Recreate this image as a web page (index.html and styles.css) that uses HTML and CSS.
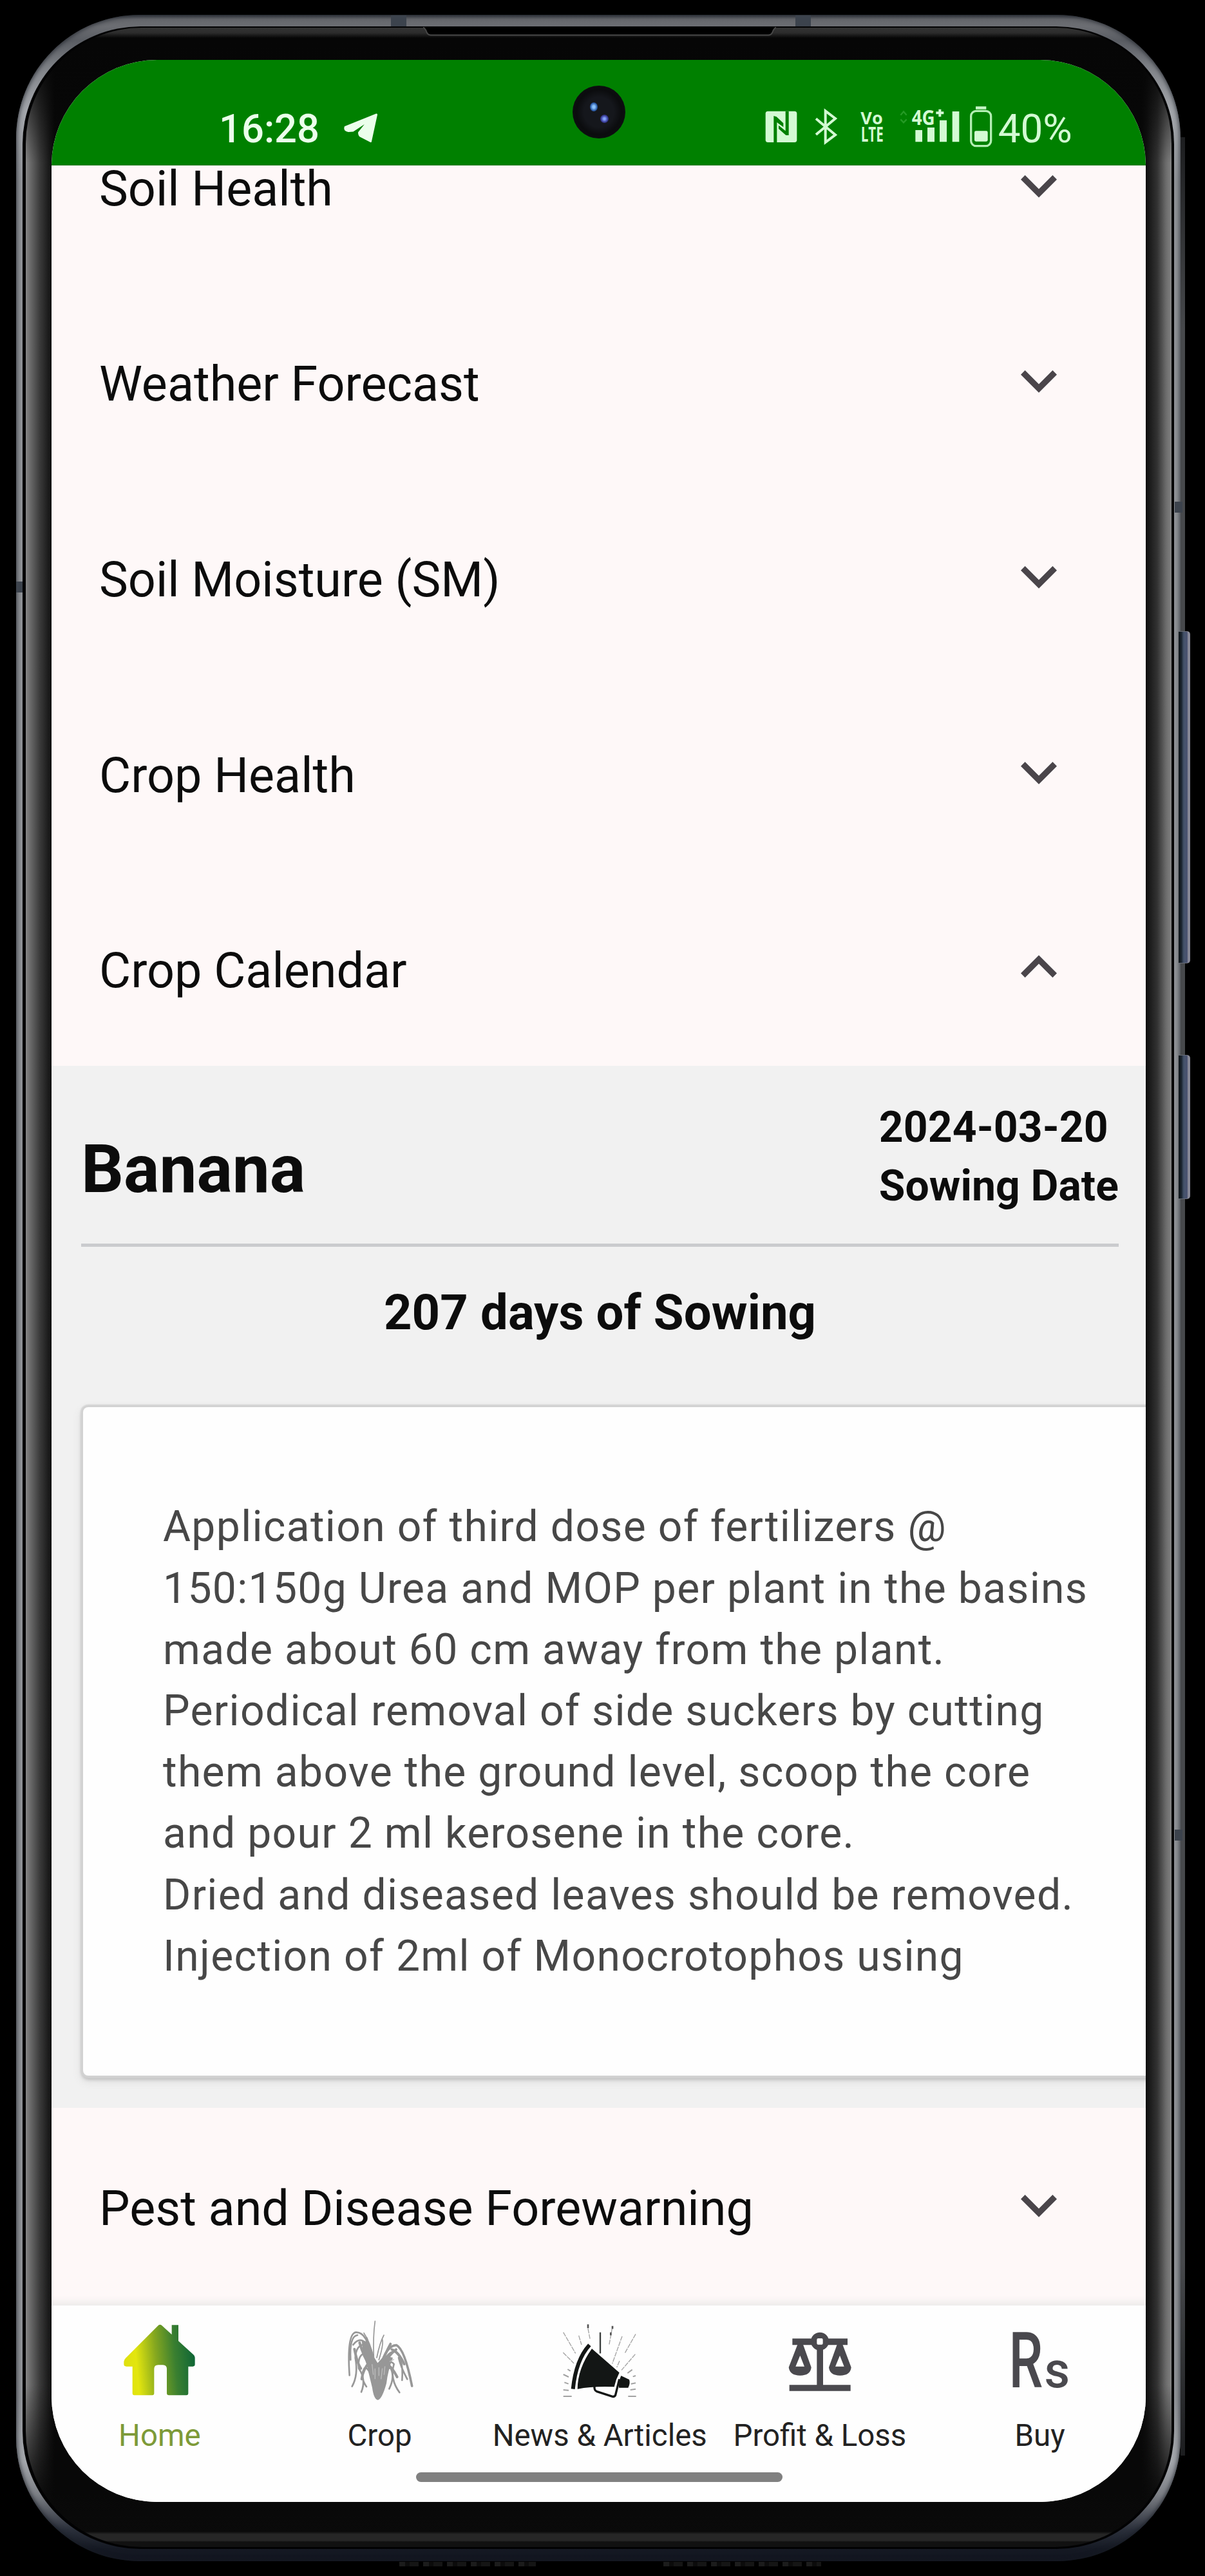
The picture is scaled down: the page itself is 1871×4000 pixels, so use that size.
FILE: index.html
```html
<!DOCTYPE html>
<html lang="en">
<head>
<meta charset="utf-8">
<title>Crop Advisory</title>
<link rel="stylesheet" href="styles.css">
</head>
<body>
<svg class="defs" width="0" height="0" aria-hidden="true">
  <symbol id="chevron" viewBox="0 0 24 24"><path d="M16.59 8.59 12 13.17 7.41 8.59 6 10l6 6 6-6z"/></symbol>
</svg>
<div class="device">
  <i class="edge edge-right"></i>
  <i class="key key-volume"></i>
  <i class="key key-power"></i>
  <i class="band band-top-left"></i>
  <i class="band band-top-right"></i>
  <i class="band band-left"></i>
  <i class="band band-right"></i>
  <i class="band band-right-low"></i>
  <i class="port port-left"></i>
  <i class="port port-right"></i>
  <div class="seam">
    <div class="glass">
      <svg class="speaker" viewBox="0 0 548 14"><path d="M0 0Q4 3 6 9Q8 12.500 12 12.500H536Q540 12.500 542 9Q544 3 548 0Z" fill="#000"/><path d="M0 0Q4 3 6 9Q8 12.500 12 12.500H536Q540 12.500 542 9Q544 3 548 0" fill="none" stroke="#484848" stroke-width="2"/></svg>
      <main class="screen">
        <header class="status">
          <span class="clock">16:28</span>
          <svg class="plane" viewBox="530 160 60 70"><path d="M584.500 178 536 197.500Q534.500 202.500 541 203.500L548 203 573 186.500 557.500 206Q557.500 210 560 211.500L575.500 219.500Z" fill="#ebffeb" stroke="#ebffeb" stroke-width="3" stroke-linejoin="round"/></svg>
          <div class="camera"><i></i><b></b></div>
          <div class="indicators">
            <svg width="63.330" height="70" viewBox="50 120 190 210"><rect x="55" y="158" width="146" height="145" rx="11" fill="#d3fad3"/><path d="M93 303V180L106 184 138 214V232L108 210V303ZM163 158V270L150 270 116 240V224L148 250V158Z" fill="#008000"/></svg>
            <svg width="70" height="70" viewBox="240 120 210 210"><path d="M291 193 381 268 335 303V157L381 192 291 267" fill="none" stroke="#d3fad3" stroke-width="12"/></svg>
            <svg class="tiny" width="70" height="70" viewBox="450 120 210 210"><text x="499" y="220" font-size="82" textLength="103" lengthAdjust="spacingAndGlyphs">Vo</text><text x="500" y="301" font-size="94" textLength="105" lengthAdjust="spacingAndGlyphs">LTE</text></svg>
            <svg class="tiny" width="110" height="70" viewBox="660 120 330 210"><path d="M685 176 699 160 713 176M685 196 699 211 713 196" fill="none" stroke="#259a25" stroke-width="7"/><text x="737" y="222" font-size="96" textLength="108" lengthAdjust="spacingAndGlyphs">4G</text><path d="M754 246H786V301H754ZM810 234H843V301H810ZM867 200H900V301H867ZM926 159H958V301H926ZM850 160H862V149H874V160H886V172H874V184H862V172H850Z" fill="#d3fad3"/></svg>
            <svg width="46.670" height="70" viewBox="990 120 140 210"><path d="M1035 136H1084V149H1035Z" fill="#c6f6c6"/><rect x="1013" y="157" width="93" height="163" rx="24" fill="none" stroke="#b4efb4" stroke-width="10"/><rect x="1029" y="250" width="62" height="49" rx="7" fill="#d3fad3"/></svg>
            <span class="percent">40%</span>
          </div>
        </header>

        <div class="scroll">
          <div class="list">
            <section class="row"><h2>Soil Health</h2><svg class="chev"><use href="#chevron"/></svg></section>
            <section class="row"><h2>Weather Forecast</h2><svg class="chev"><use href="#chevron"/></svg></section>
            <section class="row"><h2>Soil Moisture (SM)</h2><svg class="chev"><use href="#chevron"/></svg></section>
            <section class="row"><h2>Crop Health</h2><svg class="chev"><use href="#chevron"/></svg></section>
            <section class="row"><h2>Crop Calendar</h2><svg class="chev open"><use href="#chevron"/></svg></section>
            <section class="calendar">
              <div class="crop-head">
                <h3>Banana</h3>
                <p class="sown">2024-03-20<br>Sowing Date</p>
              </div>
              <p class="age">207 days of Sowing</p>
              <article class="card">Application of third dose of fertilizers @<br>150:150g Urea and MOP per plant in the basins<br>made about 60 cm away from the plant.<br>Periodical removal of side suckers by cutting<br>them above the ground level, scoop the core<br>and pour 2 ml kerosene in the core.<br>Dried and diseased leaves should be removed.<br>Injection of 2ml of Monocrotophos using</article>
            </section>
            <section class="row"><h2>Pest and Disease Forewarning</h2><svg class="chev"><use href="#chevron"/></svg></section>
          </div>
        </div>

        <nav class="tabs">
          <a class="tab active">
            <svg viewBox="70 120 390 390"><defs><linearGradient id="leaf" gradientUnits="userSpaceOnUse" x1="100" y1="320" x2="428" y2="290"><stop offset="0" stop-color="#dfe010"/><stop offset=".17" stop-color="#e3e60e"/><stop offset=".45" stop-color="#86a81f"/><stop offset=".72" stop-color="#3a7f30"/><stop offset="1" stop-color="#0f6636"/></linearGradient></defs><path d="M258 150Q266 143 275 150L321 192V148H352V222L422 286Q429 292 429 299V331Q429 341 419 341H398V466Q398 475 389 475H308Q298 475 298 466V352Q298 334 279 334H258Q239 334 239 352V466Q239 475 230 475H147Q138 475 138 466V341H110Q98 341 98 331V318Q99 309 106 302Z" fill="url(#leaf)"/></svg>
            <span>Home</span>
          </a>
          <a class="tab">
            <svg viewBox="1090 120 390 390"><g fill="none" stroke="#979797" stroke-linecap="round"><path d="M1262 130Q1252 200 1256 300M1303 195Q1284 230 1270 300M1296 215Q1302 240 1280 310M1210 185Q1240 230 1252 290" stroke-width="5"/><path d="M1143 382Q1130 190 1172 182Q1225 178 1245 300" stroke-width="8"/><path d="M1148 310Q1142 200 1180 195M1160 240Q1190 200 1222 235M1155 434Q1185 380 1170 300Q1175 240 1210 240Q1240 260 1248 330M1198 460Q1222 400 1186 350Q1180 290 1212 280Q1240 300 1252 370M1222 435Q1190 390 1212 350Q1230 340 1250 400" stroke-width="8"/><path d="M1166 260Q1180 330 1196 350M1190 230Q1210 300 1240 340M1222 210Q1240 290 1262 350M1200 400Q1206 350 1238 320" stroke-width="12"/><path d="M1434 432Q1400 260 1362 242Q1320 240 1290 330" stroke-width="11"/><path d="M1388 405Q1396 290 1350 270Q1310 280 1290 350M1376 462Q1330 400 1350 330Q1330 300 1300 370M1328 445Q1355 390 1335 350Q1320 340 1296 400M1412 400Q1380 340 1372 300" stroke-width="8"/><path d="M1334 236Q1310 280 1286 340M1360 262Q1320 290 1300 345M1398 330Q1370 270 1340 262M1365 390Q1340 340 1310 325" stroke-width="12"/></g><path d="M1200 222Q1240 215 1256 295L1274 325 1305 290 1345 300Q1322 360 1315 420Q1294 496 1274 497Q1256 492 1249 440L1226 345 1205 270Z" fill="#979797"/><path d="M1262 350V400M1280 345V385M1296 350 1290 400M1248 330 1254 380M1308 340 1304 380M1330 318 1350 308" stroke="#bdbdbd" stroke-width="4"/></svg>
            <span>Crop</span>
          </a>
          <a class="tab">
            <svg viewBox="137 120 390 390"><g fill="none" stroke="#a2a2a2" stroke-width="4"><path d="M163 182 220 280M162 276 212 326M235 197 248 240M278 165 288 216M390 165 376 242M437 200 391 328M500 190 450 278M498 284 434 358M425 315 412 345" stroke-dasharray="22 4"/><path d="M163 480H202M465 480H502M163 450 188 452M475 450 500 446M168 415 187 422M478 422 500 418M163 378 188 390M487 388 500 384M183 354 196 362M462 372 484 356" stroke-width="6"/></g><path d="M335 182V280" stroke="#3b3f3d" stroke-width="7"/><path d="M278 145V163M392 152V166M384 182V196" stroke="#555" stroke-width="8"/><path d="M285 241Q222 310 208 446" fill="none" stroke="#131615" stroke-width="18"/><path d="M296 258 424 370Q408 400 400 436 300 432 229 446 230 350 296 258Z" fill="#131615"/><path d="M432 384 470 402Q476 420 465 440H422Q420 410 432 384Z" fill="#131615"/><path d="M308 432Q306 452 318 457L392 481Q402 483 406 474L424 400" fill="none" stroke="#131615" stroke-width="10"/></svg>
            <span>News &amp; Articles</span>
          </a>
          <a class="tab">
            <svg viewBox="1161 120 390 390"><g fill="#4a494e"><path d="M1228 211H1485V241H1228ZM1342 240H1371V430H1342ZM1214 427H1499V455H1214Z"/><circle cx="1356" cy="224" r="42"/><path fill-rule="evenodd" d="M1253 236H1277L1316 345Q1312 383 1264 383 1216 383 1211 345ZM1264 290 1243 341H1284ZM1437 236H1461L1502 345Q1498 383 1450 383 1402 383 1398 345ZM1449 290 1428 341H1469Z"/></g><rect x="1342" y="210" width="28" height="29" rx="6" fill="#fff"/></svg>
            <span>Profit &amp; Loss</span>
          </a>
          <a class="tab">
            <svg class="rupee" viewBox="0 0 130 130"><text transform="translate(16.500 106) scale(.7 1)" font-size="120">R</text><text x="71.500" y="106" font-size="77">s</text></svg>
            <span>Buy</span>
          </a>
        </nav>
        <i class="gesture"></i>
      </main>
    </div>
  </div>
</div>
</body>
</html>
```
FILE: styles.css
```css
* { box-sizing: border-box; }
body {
  margin: 0;
  height: 4000px;
  padding: 23px 0 0 25px;
  background: #000;
  font-family: Roboto, "Liberation Sans", sans-serif;
  color: #0c0c0c;
  overflow: hidden;
}
h2, h3, p { margin: 0; }
.defs { position: absolute; }

/* phone body */
.device {
  position: relative;
  width: 1808px;
  height: 3954px;
  padding: 18px 10px 19px;
  border-radius: 192px;
  background: linear-gradient(#3c4047 0, #65676c 7px, #6c6e73 18px, #5a5d63 40px, #85888d 90px, #a4a7ac 150px, #8f9297 260px, #8f9297 3700px, #a4a7ac 3800px, #7d8086 3850px, #2a2f3a 3905px, #151923 3935px, #121520 100%);
  box-shadow: inset 0 0 7px 1px rgba(22, 26, 34, .8);
}
.seam {
  height: 100%;
  padding: 2px 4px 3px 5px;
  border-radius: 183px;
  background: #020203;
}
.glass {
  position: relative;
  height: 100%;
  padding: 50px 40px 69px;
  border-radius: 180px;
  background:
    linear-gradient(#333 0, #2c2c2c 8px, #060606 16px, rgba(6,6,6,.9) 60px, rgba(6,6,6,0) 210px, rgba(6,6,6,0) 3660px, rgba(8,8,8,.9) 3830px, #0a0a0a 3888px, #262626 3892px, #262626 3902px, #111 3904px, #111 100%),
    linear-gradient(90deg, #868686 0, #6a6a6a 7px, #3a3a3a 22px, #141414 38px, #080808 45px, #080808 1732px, #101010 1740px, #333 1757px, #6a6a6a 1770px, #868686 1780px);
}
.speaker {
  position: absolute;
  left: 617px;
  top: -1px;
  width: 548px;
  height: 14px;
}
.edge-right {
  position: absolute;
  left: 1808px;
  top: 190px;
  width: 7px;
  height: 3600px;
  background: linear-gradient(#1c1d1f, #47494c 300px, #47494c 3300px, #1c1d1f);
}
.key {
  position: absolute;
  left: 1805px;
  width: 18px;
  border: 1px solid #676b75;
  border-left: 0;
  border-right: 4px solid #878896;
  border-radius: 0 5px 5px 0;
  background: linear-gradient(90deg, #10171a 0, #17202a 4px, #44526a 8px, #4a5270 13px);
}
.key-volume { top: 957px; height: 516px; }
.key-power { top: 1615px; height: 224px; }
.band { position: absolute; background: #3c434d; }
.band-top-left { left: 582px; top: 1px; width: 24px; height: 17px; }
.band-top-right { left: 1210px; top: 1px; width: 24px; height: 17px; }
.band-left { left: 0; top: 880px; width: 10px; height: 17px; }
.band-right { left: 1799px; top: 756px; width: 12px; height: 17px; }
.band-right-low { left: 1799px; top: 2818px; width: 12px; height: 17px; }
.port {
  position: absolute;
  top: 3955px;
  height: 7px;
  background: repeating-linear-gradient(90deg, #1c1c1c 0 9px, #0c0c0c 9px 16px, #151515 16px 30px, #000 30px 37px);
}
.port-left { left: 595px; width: 212px; }
.port-right { left: 1005px; width: 245px; }

/* display */
.screen {
  position: relative;
  display: flex;
  flex-direction: column;
  height: 3792px;
  width: 1699px;
  border-radius: 164px;
  overflow: hidden;
  background: #fefefe;
}
.status {
  flex: none;
  display: flex;
  height: 164px;
  padding: 67px 0 0 260px;
  background: #008000;
  border-bottom: 1px solid #267f20;
  line-height: 80px;
}
.clock { width: 190px; font-size: 61.500px; font-weight: 500; color: #ebffeb; }
.plane { width: 60px; height: 70px; }
.camera {
  position: absolute;
  left: 809px;
  top: 40px;
  width: 82px;
  height: 82px;
  border-radius: 50%;
  background: radial-gradient(#15171c 0 40%, #0b0c0e 60%, #101214 100%);
}
.camera i, .camera b { position: absolute; border-radius: 50%; }
.camera i { left: 27px; top: 26px; width: 12px; height: 14px; background: radial-gradient(#8cc4ff 20%, #2b5ca8 60%, #10182a); }
.camera b { left: 43px; top: 45px; width: 13px; height: 13px; background: radial-gradient(#86a6ff 15%, #3c3f9c 55%, #131428); }
.indicators { display: flex; margin-left: 596.700px; }
.indicators svg { flex: none; }
.tiny text { font-family: "Open Sans", Roboto, sans-serif; font-weight: 700; fill: #d3fad3; }
.percent { padding-left: 3px; font-size: 62px; color: #d3fad3; }

.scroll { height: 3323px; flex: none; overflow: hidden; background: #fef8f8; }
.list { margin-top: -120px; }
.row {
  display: flex;
  justify-content: space-between;
  align-items: center;
  height: 303.600px;
  padding: 0 110px 0 74px;
}
.row h2 { padding-top: 8px; font-size: 75.500px; font-weight: 400; line-height: 90px; }
.chev { width: 112px; height: 112px; margin-top: -2px; fill: #4a454a; }
.open { transform: rotate(180deg); }

.calendar {
  height: 1618px;
  padding: 50px 0 0 46px;
  background: #f1f1f1;
  overflow: hidden;
}
.crop-head {
  display: flex;
  justify-content: space-between;
  align-items: center;
  width: 1611px;
  height: 231px;
  padding-bottom: 44px;
  border-bottom: 5px solid #cacbce;
}
.crop-head h3 { padding-top: 41px; font-size: 103.500px; line-height: 122px; }
.sown { font-size: 66px; font-weight: 700; line-height: 91px; letter-spacing: .1px; }
.age { margin-top: 57px; padding-right: 42px; text-align: center; font-size: 76px; font-weight: 700; line-height: 90px; letter-spacing: .1px; }
.card {
  width: 1800px;
  height: 1038px;
  margin: 102px 0 0 3px;
  padding: 138.500px 0 0 124px;
  border-radius: 8px;
  background: #fefefe;
  box-shadow: 0 0 2px 4px #d2d2d2, 0 4px 5px 2px #bcbcbc, 0 6px 14px 3px #dcdcdc;
  font-size: 66px;
  line-height: 95.200px;
  letter-spacing: 1.320px;
  white-space: nowrap;
  color: #474747;
}

/* bottom bar */
.tabs {
  position: relative;
  flex: none;
  display: grid;
  grid-template-columns: repeat(5, 341.700px);
  height: 305px;
  margin-left: -3px;
  padding-top: 21px;
  background: #fefefe;
  box-shadow: 0 -2px 10px 4px #ecebea;
}
.tab { display: flex; flex-direction: column; align-items: center; gap: 23px; font-size: 47.400px; line-height: 56px; white-space: nowrap; color: #222; }
.tab svg { width: 130px; height: 130px; flex: none; }
.active { color: #7d9a38; }
.rupee text { font-family: Roboto, sans-serif; font-weight: 500; fill: #4a494e; }
.gesture {
  position: absolute;
  left: 566px;
  bottom: 31px;
  width: 569px;
  height: 15px;
  border-radius: 8px;
  background: #808080;
}
```
